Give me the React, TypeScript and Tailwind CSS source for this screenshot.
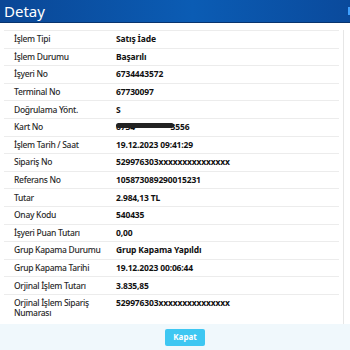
const rows: [string, string][] = [
  ['İşlem Tipi', 'Satış İade'],
  ['İşlem Durumu', 'Başarılı'],
  ['İşyeri No', '6734443572'],
  ['Terminal No', '67730097'],
  ['Doğrulama Yönt.', 'S'],
  ['Kart No', '6734********3556'],
  ['İşlem Tarih / Saat', '19.12.2023 09:41:29'],
  ['Sipariş No', '529976303xxxxxxxxxxxxxxx'],
  ['Referans No', '105873089290015231'],
  ['Tutar', '2.984,13 TL'],
  ['Onay Kodu', '540435'],
  ['İşyeri Puan Tutarı', '0,00'],
  ['Grup Kapama Durumu', 'Grup Kapama Yapıldı'],
  ['Grup Kapama Tarihi', '19.12.2023 00:06:44'],
  ['Orjinal İşlem Tutarı', '3.835,85'],
  ['Orjinal İşlem Sipariş Numarası', '529976303xxxxxxxxxxxxxxx'],
];

export default function App() {
  return (
    <div className="w-[350px] h-[350px] overflow-hidden bg-white flex flex-col font-['Noto_Sans',sans-serif]">
      {/* Header */}
      <div className="h-[23px] shrink-0 flex items-center justify-between pl-[4px] bg-[linear-gradient(90deg,#0a4796_0%,#0b5cb4_55%,#0a4a9c_100%)] border-b border-[#08346e]">
        <span className="text-white text-[15px] leading-none">Detay</span>
        <span className="w-[2px] h-[8px] bg-[#3fa0ff]" />
      </div>

      {/* Body */}
      <div className="flex-1 flex flex-col pt-[7px] pl-[4px] pr-[6px]">
        <div className="flex flex-col border-r border-[#e6e6e6] pr-[4px]">
          {rows.map(([label, value], i) => (
            <div
              key={label}
              className={`flex border-t border-[#ececec] ${i === rows.length - 1 ? 'min-h-[30px] py-[3px]' : 'h-[17.6px] items-center'}`}
            >
              <div className="w-[112px] pl-[10px] pr-[14px] text-[8.5px] font-medium tracking-[-0.3px] text-[#2a2a2a] leading-[10px]">
                {label}
              </div>
              <div className="flex-1 text-[8.5px] font-bold tracking-[-0.15px] text-[#111] leading-[10px]">
                {label === 'Kart No' ? (
                  <span className="relative inline-block">
                    <span>6734********</span>
                    <span className="absolute left-0 top-[1px] w-[58px] h-[5px] bg-[#222] rounded-full" />
                    <span>3556</span>
                  </span>
                ) : (
                  value
                )}
              </div>
            </div>
          ))}
        </div>
        <div className="flex-1 bg-[#f0f8fc] flex justify-center items-start pt-[5px] -mr-[6px] -ml-[4px]">
          <button className="ml-[20px] w-[40px] h-[17px] bg-[#3ec7f2] rounded-[2px] text-white text-[8px] font-bold">
            Kapat
          </button>
        </div>
      </div>
    </div>
  );
}
